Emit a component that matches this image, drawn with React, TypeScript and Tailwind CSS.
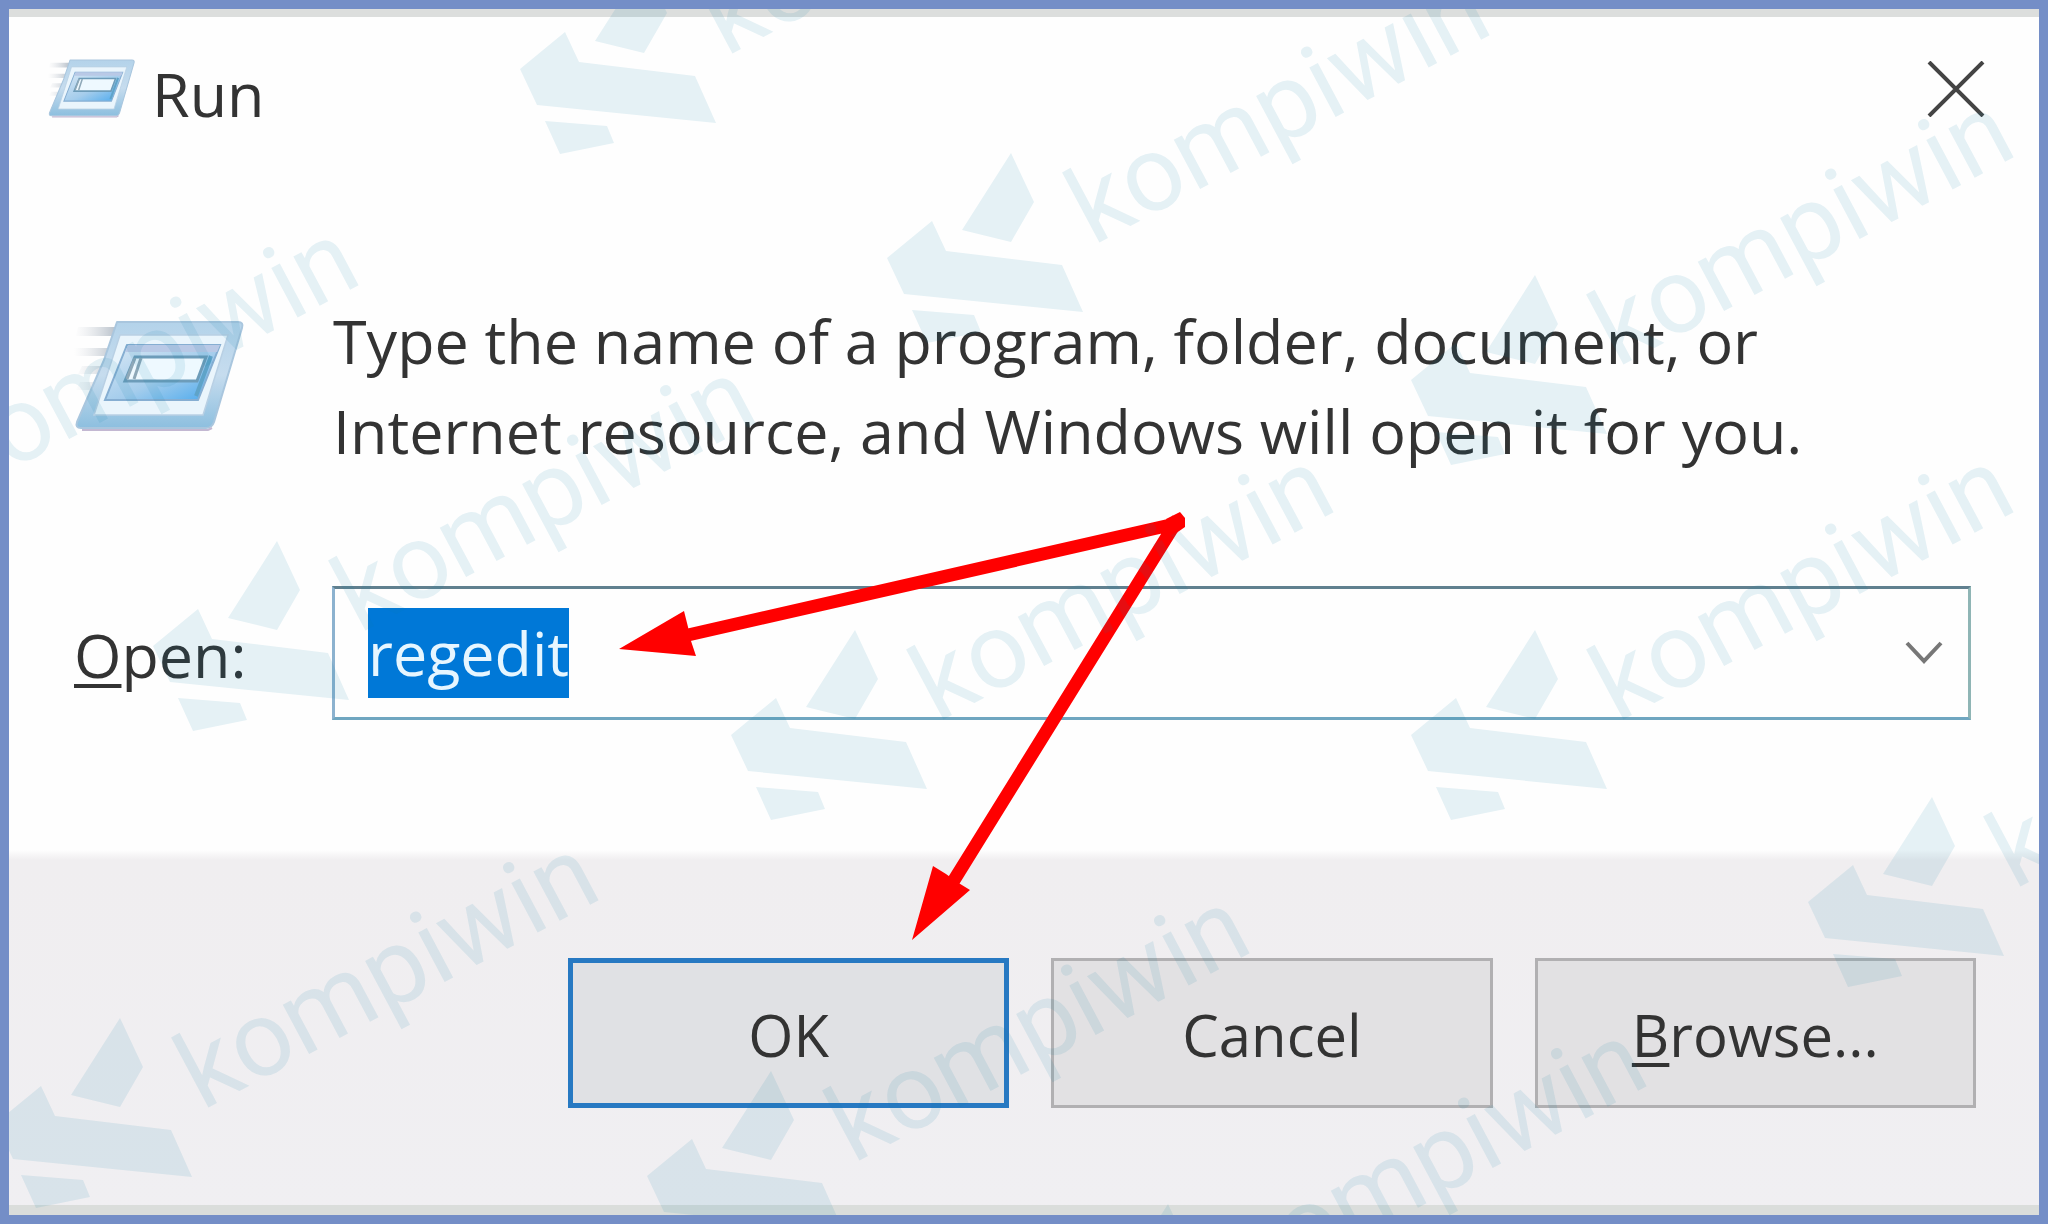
import React from "react";

function RunIcon({ id, className }: { id: string; className: string }) {
  return (
    <svg viewBox="0 0 172 114" className={className} preserveAspectRatio="none" aria-hidden="true">
      <defs>
        <linearGradient id={`${id}-frame`} x1="0" y1="0" x2="0" y2="1">
          <stop offset="0" stopColor="#b4d3ea" />
          <stop offset="0.5" stopColor="#c6dcee" />
          <stop offset="1" stopColor="#8dbfdf" />
        </linearGradient>
        <linearGradient id={`${id}-pane`} x1="0" y1="0" x2="1" y2="1">
          <stop offset="0" stopColor="#dbe9f5" />
          <stop offset="0.55" stopColor="#a5cdec" />
          <stop offset="1" stopColor="#45a7ee" />
        </linearGradient>
        <linearGradient id={`${id}-trail`} x1="0" y1="0" x2="1" y2="0">
          <stop offset="0" stopColor="#d9dde2" stopOpacity="0" />
          <stop offset="1" stopColor="#b3bcc6" />
        </linearGradient>
      </defs>
      <path d="M4 7H44L40 16H2ZM0 28H38L35 36H0ZM8 46H30L27 54H4ZM6 62H26L22 70H2Z" fill={`url(#${id}-trail)`} />
      <path d="M43 2H164Q170 2 168 8L140 102Q138 108 132 108H7Q1 108 3 102L30 40Z" fill={`url(#${id}-frame)`} stroke="#a9c6de" strokeWidth="2" strokeLinejoin="round" />
      <path d="M8 110H134L138 108" stroke="#c3b8d2" strokeWidth="2" fill="none" />
      <path d="M46 15H154L129 95H20Z" fill="#eaf5fc" stroke="#b9d0e4" strokeWidth="1.5" />
      <path d="M53 25H146L124 80H31Z" fill={`url(#${id}-pane)`} stroke="#86aed2" strokeWidth="2" />
      <path d="M54 25H146L143 32H51Z" fill="#b9c9e6" />
      <path d="M61 37H132L123 61H51Z" fill="#eef9ff" stroke="#6d9cb9" strokeWidth="3" />
      <path d="M61 38L53 59M67 38L60 59" stroke="#8ea8b8" strokeWidth="3" />
      <path d="M137 36L122 76" stroke="#5fa3c8" strokeWidth="4" />
    </svg>
  );
}

const marks: [number, number][] = [
  [644, -36],
  [1011, 153],
  [1535, 275],
  [-120, 403],
  [277, 541],
  [855, 630],
  [1535, 630],
  [1932, 797],
  [120, 1018],
  [771, 1071],
  [1168, 1204],
];

function Overlay() {
  return (
    <svg
      viewBox="9 9 2030 1206"
      preserveAspectRatio="xMidYMin slice"
      className="pointer-events-none absolute inset-0 h-full w-full"
      aria-hidden="true"
    >
      <g fill="#ff0000" stroke="#ff0000">
        <path d="M1179 523L688 635M1178 519L951 885" strokeWidth="13" fill="none" />
        <path d="M1180 512L1185 518V527L1172 536L1166 519Z" stroke="none" />
        <path d="M619 649L684 611L688 627L691 641L696 656Z" stroke="none" />
        <path d="M912 940L933 866L946 874L957 882L970 890Z" stroke="none" />
      </g>
      <g fill="#0a82aa" fillOpacity="0.1">
        {marks.map(([x, y]) => (
          <g key={`${x}-${y}`} transform={`translate(${x} ${y})`}>
            <path d="M0 0L23 49L0 89L-49 77ZM-79 68L-65 98L51 112L72 159L-107 141L-124 105ZM-99 157L-37 162L-30 179L-84 190Z" />
            <text
              x="0"
              y="0"
              transform="translate(82 93) rotate(-28)"
              className="text-[106px] font-normal"
              fontFamily="Roboto, sans-serif"
            >
              kompiwin
            </text>
          </g>
        ))}
      </g>
    </svg>
  );
}

function DialogButton({ children, primary = false }: { children: React.ReactNode; primary?: boolean }) {
  return (
    <button
      type="button"
      className={
        primary
          ? "h-[150px] border-[5px] border-[#2779c2] bg-[#e0e1e4] pt-1"
          : "h-[150px] border-[3px] border-[#b1b0b2] bg-[#e2e1e3] pt-1"
      }
    >
      {children}
    </button>
  );
}

export default function App() {
  return (
    <div className="relative flex min-h-screen flex-col overflow-hidden border-[9px] border-[#748ec7] bg-[#fefefe] font-['Open_Sans',sans-serif] text-[61px] leading-[90px] text-[#333333]">
      <div className="h-2 bg-[#dcdedd]" />
      <header className="flex items-start justify-between pt-8 pr-[54px] pl-[39px]">
        <div className="flex items-start gap-4">
          <RunIcon id="small" className="mt-[10px] h-[60px] w-[88px]" />
          <h1>Run</h1>
        </div>
        <button type="button" aria-label="Close" className="mt-3">
          <svg viewBox="0 0 58 56" className="h-[56px] w-[58px]" fill="none" stroke="#444444" strokeWidth="4">
            <path d="M2 1L56 55M56 1L2 55" />
          </svg>
        </button>
      </header>

      <main className="flex flex-col gap-[110px] pt-[157px] pr-[68px] pb-[130px] pl-[65px]">
        <div className="flex items-start gap-[87px]">
          <RunIcon id="large" className="mt-6 h-[114px] w-[172px] shrink-0" />
          <p>
            Type the name of a program, folder, document, or
            <br />
            Internet resource, and Windows will open it for you.
          </p>
        </div>
        <div className="flex items-center">
          <label htmlFor="open" className="w-[258px] shrink-0 pt-1">
            <span className="underline decoration-[4px] underline-offset-[6px]">O</span>pen:
          </label>
          <div className="flex h-[134px] flex-1 items-center justify-between border-[3px] border-t-[#60808f] border-r-[#8fb5b5] border-b-[#6fa6c0] border-l-[#8cb2cf] bg-[#fefefe] pr-[25px] pl-[33px]">
            <input
              id="open"
              type="text"
              defaultValue="regedit"
              className="field-sizing-content h-[90px] bg-[#0078d7] text-[#e6f6ff] outline-none"
            />
            <button type="button" aria-label="Show history">
              <svg viewBox="0 0 38 26" className="h-[26px] w-[38px]" fill="none" stroke="#777777" strokeWidth="4">
                <path d="M2 3L19 21L36 3" />
              </svg>
            </button>
          </div>
        </div>
      </main>

      <footer className="flex flex-1 flex-col justify-between bg-linear-to-b from-[#fefefe] via-[#f0eef0] via-[10px] to-[#f0eff2]">
        <div className="grid grid-cols-3 gap-[42px] pt-[108px] pr-[63px] pl-[559px] text-[58px]">
          <DialogButton primary>OK</DialogButton>
          <DialogButton>Cancel</DialogButton>
          <DialogButton>
            <span className="underline decoration-[4px] underline-offset-[6px]">B</span>rowse...
          </DialogButton>
        </div>
        <div className="h-[10px] bg-[#dadddb]" />
      </footer>
      <Overlay />
    </div>
  );
}
